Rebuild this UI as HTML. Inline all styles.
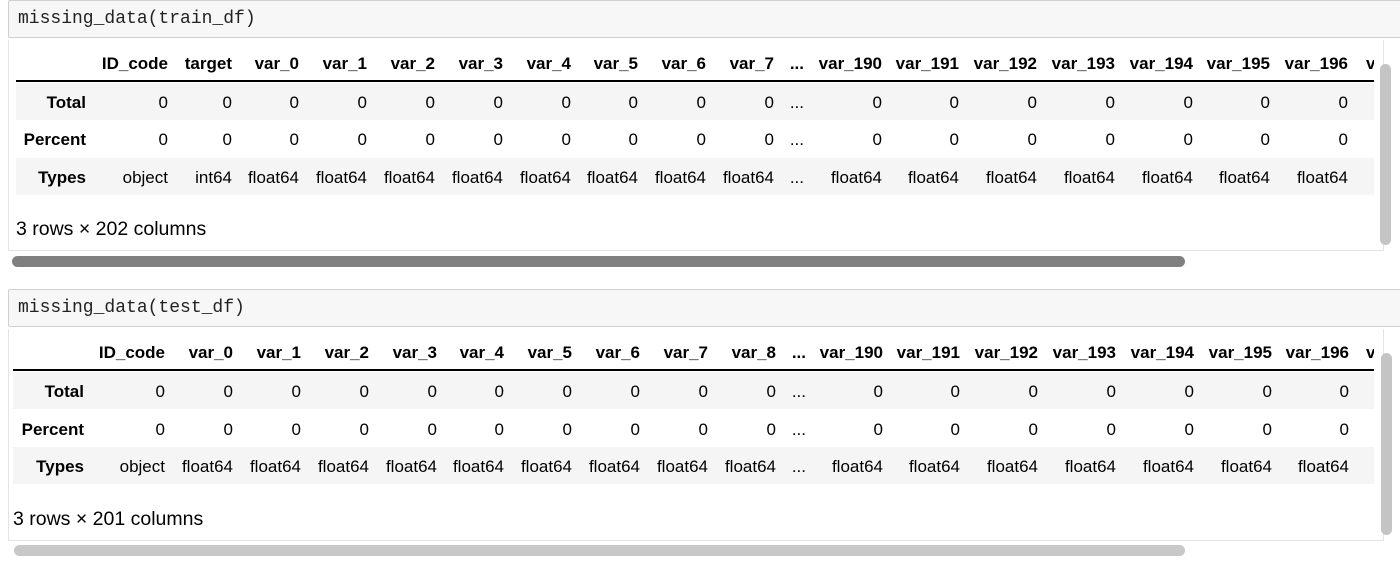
<!DOCTYPE html>
<html><head><meta charset="utf-8"><style>
body{margin:0;width:1400px;height:566px;background:#fff;position:relative;overflow:hidden;font-family:"Liberation Sans",Arial,sans-serif;color:#000}
.in{position:absolute;left:8px;width:1400px;height:38px;background:#f7f7f7;border:1px solid #cfcfcf;border-radius:2px;box-sizing:border-box}
.in span{position:absolute;left:9px;top:8px;font-family:"Liberation Mono",monospace;font-size:18px;color:#222}
.t{position:absolute;left:0;width:1374px;height:200px;overflow:hidden}
.band{position:absolute;height:37px;background:#f5f5f5}
.line{position:absolute;height:2px;background:#000}
.r{position:absolute;font-size:17px;line-height:20px;height:20px}
.r div{position:absolute;top:0;width:100px;margin-left:-100px;text-align:right;white-space:nowrap}
.h{font-weight:bold}
.note{position:absolute;font-size:19.5px}
.hs{position:absolute;height:11px;border-radius:6px}
.vs{position:absolute;width:11px;border-radius:6px;background:#c4c4c4}
.ob{position:absolute;border:1px solid #e4e4e4}
</style></head><body>

<div class="in" style="top:0"><span>missing_data(train_df)</span></div>
<div class="ob" style="left:8px;top:40px;width:1374px;height:210px;border-top:none"></div>
<div class="t" style="top:0">
<div class="band" style="left:16px;top:83px;width:1358px"></div>
<div class="band" style="left:16px;top:158px;width:1358px"></div>
<div class="line" style="left:16px;top:80px;width:1358px"></div>
<div class="r h" style="top:54px;left:0">
<div style="left:168px">ID_code</div><div style="left:232px">target</div><div style="left:299px">var_0</div><div style="left:367px">var_1</div><div style="left:435px">var_2</div><div style="left:503px">var_3</div><div style="left:571px">var_4</div><div style="left:638px">var_5</div><div style="left:706px">var_6</div><div style="left:774px">var_7</div><div style="left:804px">...</div><div style="left:882px">var_190</div><div style="left:959px">var_191</div><div style="left:1037px">var_192</div><div style="left:1115px">var_193</div><div style="left:1193px">var_194</div><div style="left:1270px">var_195</div><div style="left:1348px">var_196</div><div style="left:1400px;text-align:left;margin-left:-34px">var_197</div></div>
<div class="r" style="top:93px;left:0">
<div class="h" style="left:86px">Total</div><div style="left:168px">0</div><div style="left:232px">0</div><div style="left:299px">0</div><div style="left:367px">0</div><div style="left:435px">0</div><div style="left:503px">0</div><div style="left:571px">0</div><div style="left:638px">0</div><div style="left:706px">0</div><div style="left:774px">0</div><div style="left:804px">...</div><div style="left:882px">0</div><div style="left:959px">0</div><div style="left:1037px">0</div><div style="left:1115px">0</div><div style="left:1193px">0</div><div style="left:1270px">0</div><div style="left:1348px">0</div></div>
<div class="r" style="top:130px;left:0">
<div class="h" style="left:86px">Percent</div><div style="left:168px">0</div><div style="left:232px">0</div><div style="left:299px">0</div><div style="left:367px">0</div><div style="left:435px">0</div><div style="left:503px">0</div><div style="left:571px">0</div><div style="left:638px">0</div><div style="left:706px">0</div><div style="left:774px">0</div><div style="left:804px">...</div><div style="left:882px">0</div><div style="left:959px">0</div><div style="left:1037px">0</div><div style="left:1115px">0</div><div style="left:1193px">0</div><div style="left:1270px">0</div><div style="left:1348px">0</div></div>
<div class="r" style="top:168px;left:0">
<div class="h" style="left:86px">Types</div><div style="left:168px">object</div><div style="left:232px">int64</div><div style="left:299px">float64</div><div style="left:367px">float64</div><div style="left:435px">float64</div><div style="left:503px">float64</div><div style="left:571px">float64</div><div style="left:638px">float64</div><div style="left:706px">float64</div><div style="left:774px">float64</div><div style="left:804px">...</div><div style="left:882px">float64</div><div style="left:959px">float64</div><div style="left:1037px">float64</div><div style="left:1115px">float64</div><div style="left:1193px">float64</div><div style="left:1270px">float64</div><div style="left:1348px">float64</div></div>
</div>
<div class="note" style="left:16px;top:218px">3 rows × 202 columns</div>
<div class="vs" style="left:1380px;top:64px;height:181px"></div>
<div class="hs" style="left:12px;top:256px;width:1173px;background:#808080"></div>

<div class="in" style="top:289px"><span>missing_data(test_df)</span></div>
<div class="ob" style="left:8px;top:329px;width:1374px;height:211px;border-top:none"></div>
<div class="t" style="top:289px">
<div class="band" style="left:13px;top:83px;width:1361px"></div>
<div class="band" style="left:13px;top:158px;width:1361px"></div>
<div class="line" style="left:13px;top:80px;width:1361px"></div>
<div class="r h" style="top:54px;left:0">
<div style="left:165px">ID_code</div><div style="left:233px">var_0</div><div style="left:301px">var_1</div><div style="left:369px">var_2</div><div style="left:437px">var_3</div><div style="left:504px">var_4</div><div style="left:572px">var_5</div><div style="left:640px">var_6</div><div style="left:708px">var_7</div><div style="left:776px">var_8</div><div style="left:806px">...</div><div style="left:883px">var_190</div><div style="left:960px">var_191</div><div style="left:1038px">var_192</div><div style="left:1116px">var_193</div><div style="left:1194px">var_194</div><div style="left:1272px">var_195</div><div style="left:1349px">var_196</div><div style="left:1400px;text-align:left;margin-left:-34px">var_197</div></div>
<div class="r" style="top:93px;left:0">
<div class="h" style="left:84px">Total</div><div style="left:165px">0</div><div style="left:233px">0</div><div style="left:301px">0</div><div style="left:369px">0</div><div style="left:437px">0</div><div style="left:504px">0</div><div style="left:572px">0</div><div style="left:640px">0</div><div style="left:708px">0</div><div style="left:776px">0</div><div style="left:806px">...</div><div style="left:883px">0</div><div style="left:960px">0</div><div style="left:1038px">0</div><div style="left:1116px">0</div><div style="left:1194px">0</div><div style="left:1272px">0</div><div style="left:1349px">0</div></div>
<div class="r" style="top:131px;left:0">
<div class="h" style="left:84px">Percent</div><div style="left:165px">0</div><div style="left:233px">0</div><div style="left:301px">0</div><div style="left:369px">0</div><div style="left:437px">0</div><div style="left:504px">0</div><div style="left:572px">0</div><div style="left:640px">0</div><div style="left:708px">0</div><div style="left:776px">0</div><div style="left:806px">...</div><div style="left:883px">0</div><div style="left:960px">0</div><div style="left:1038px">0</div><div style="left:1116px">0</div><div style="left:1194px">0</div><div style="left:1272px">0</div><div style="left:1349px">0</div></div>
<div class="r" style="top:168px;left:0">
<div class="h" style="left:84px">Types</div><div style="left:165px">object</div><div style="left:233px">float64</div><div style="left:301px">float64</div><div style="left:369px">float64</div><div style="left:437px">float64</div><div style="left:504px">float64</div><div style="left:572px">float64</div><div style="left:640px">float64</div><div style="left:708px">float64</div><div style="left:776px">float64</div><div style="left:806px">...</div><div style="left:883px">float64</div><div style="left:960px">float64</div><div style="left:1038px">float64</div><div style="left:1116px">float64</div><div style="left:1194px">float64</div><div style="left:1272px">float64</div><div style="left:1349px">float64</div></div>
</div>
<div class="note" style="left:13px;top:508px">3 rows × 201 columns</div>
<div class="vs" style="left:1381px;top:353px;height:182px"></div>
<div class="hs" style="left:14px;top:545px;width:1171px;background:#c8c8c8"></div>
</body></html>
